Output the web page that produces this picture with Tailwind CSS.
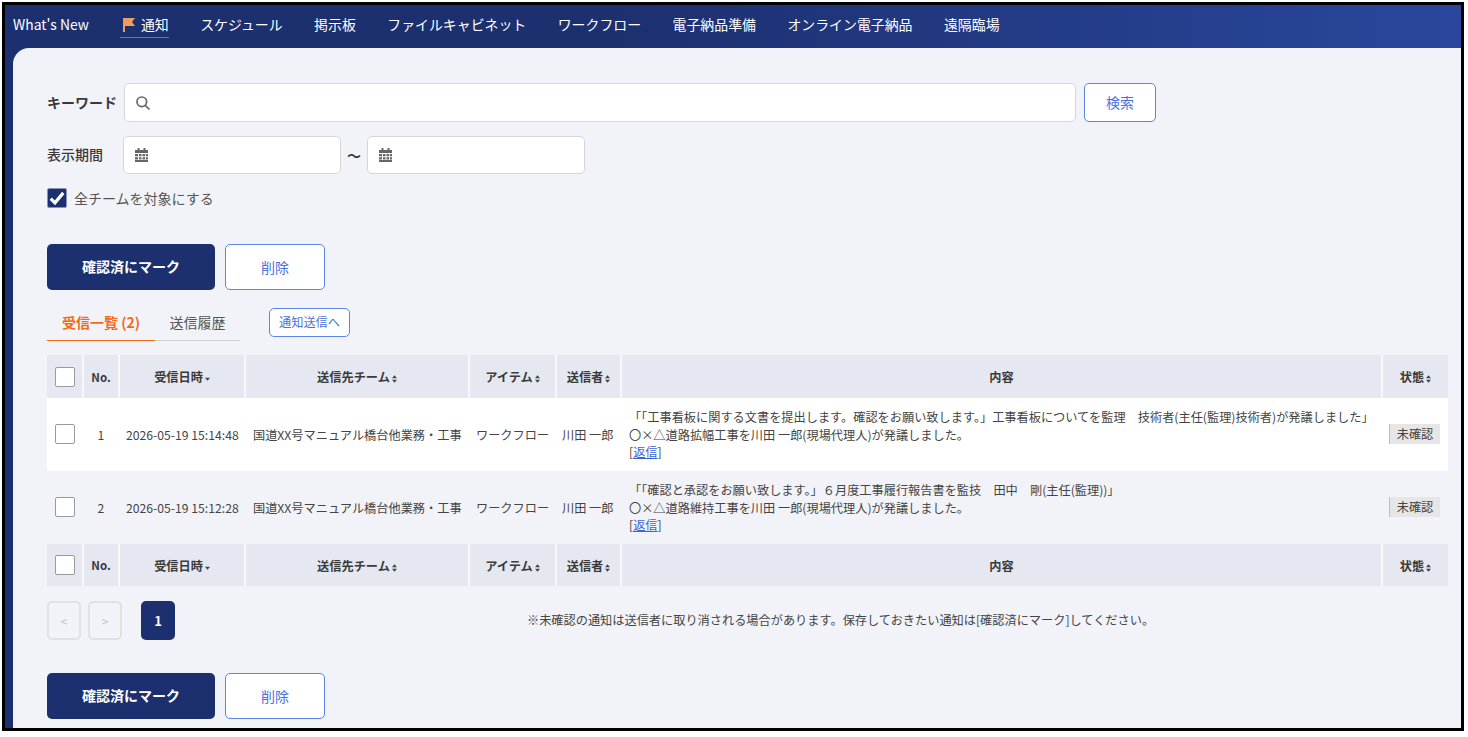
<!DOCTYPE html>
<html lang="ja">
<head>
<meta charset="utf-8">
<script src="https://cdn.jsdelivr.net/npm/@tailwindcss/browser@4"></script>
</head>
<body class="bg-white overflow-hidden font-['Noto_Sans_CJK_JP','Noto_Sans',sans-serif] text-[#3a3a3a]">
<div class="w-[1462px] h-[729px] m-[2px] border-[3px] border-black bg-[#1c2f6e] flex flex-col overflow-hidden">
  <nav class="h-[43px] shrink-0 flex items-center pl-[8px] pb-[4px] text-[13.9px] text-white bg-gradient-to-r from-[#1c2f6e] from-40% to-[#2a479d]">
    <span class="mr-[31px]">What's New</span>
    <span class="flex items-center gap-[5px] mr-[31.5px] pt-[2px] pb-[1px] h-[27px] border-b border-[#4f7be0] pl-[2px]">
      <svg class="w-[14px] h-[15px]" viewBox="0 0 14 15"><path d="M1 1h12l-3 4 3 4H3v6H1z" fill="#ee9d5c"/></svg>
      <span>通知</span>
    </span>
    <span class="mr-[31.5px]">スケジュール</span>
    <span class="mr-[31.5px]">掲示板</span>
    <span class="mr-[31.5px]">ファイルキャビネット</span>
    <span class="mr-[31.5px]">ワークフロー</span>
    <span class="mr-[31.5px]">電子納品準備</span>
    <span class="mr-[31.5px]">オンライン電子納品</span>
    <span>遠隔臨場</span>
  </nav>
  <main class="flex-1 ml-[8px] bg-[#f2f3f8] rounded-tl-[16px] pl-[34px] pr-[13px] pt-[35px] overflow-hidden">
    <div class="flex items-center h-[39px]">
      <label class="w-[77px] text-[14px] font-bold whitespace-nowrap">キーワード</label>
      <div class="w-[952px] h-[39px] bg-white border border-[#d6d6d6] rounded-[5px] flex items-center pl-[10px]">
        <svg class="w-[16px] h-[16px]" viewBox="0 0 16 16" fill="none" stroke="#666" stroke-width="1.7"><circle cx="6.8" cy="6.8" r="4.8"/><path d="M10.3 10.3l4.2 4.2"/></svg>
      </div>
      <button class="ml-[8px] w-[72px] h-[39px] bg-white border border-[#5d84ea] rounded-[5px] text-[14px] text-[#4a72e0]">検索</button>
    </div>
    <div class="flex items-center h-[38px] mt-[14px]">
      <label class="w-[76px] text-[14px] font-medium whitespace-nowrap pb-[2px]">表示期間</label>
      <div class="w-[218px] h-[38px] bg-white border border-[#d6d6d6] rounded-[5px] flex items-center pl-[11px]">
        <svg class="w-[13px] h-[14px]" viewBox="0 0 13 14" fill="#666"><path d="M2.5 0h2v2h4V0h2v2H13v3H0V2h2.5z"/><path d="M0 6h3v2.2H0zM4 6h2.5v2.2H4zM7.5 6H10v2.2H7.5zM10.8 6H13v2.2h-2.2zM0 9.2h3v2.2H0zM4 9.2h2.5v2.2H4zM7.5 9.2H10v2.2H7.5zM10.8 9.2H13v2.2h-2.2zM0 12h13v2H0z"/></svg>
      </div>
      <span class="w-[26px] text-center text-[14px] font-bold">～</span>
      <div class="w-[218px] h-[38px] bg-white border border-[#d6d6d6] rounded-[5px] flex items-center pl-[11px]">
        <svg class="w-[13px] h-[14px]" viewBox="0 0 13 14" fill="#666"><path d="M2.5 0h2v2h4V0h2v2H13v3H0V2h2.5z"/><path d="M0 6h3v2.2H0zM4 6h2.5v2.2H4zM7.5 6H10v2.2H7.5zM10.8 6H13v2.2h-2.2zM0 9.2h3v2.2H0zM4 9.2h2.5v2.2H4zM7.5 9.2H10v2.2H7.5zM10.8 9.2H13v2.2h-2.2zM0 12h13v2H0z"/></svg>
      </div>
    </div>
    <div class="flex items-center mt-[14px] h-[20px]">
      <span class="w-[20px] h-[20px] bg-[#1c2f6e] rounded-[2px] border border-[#8a94b5] flex items-center justify-center">
        <svg class="w-[16px] h-[16px]" viewBox="0 0 14 14" fill="none" stroke="#fff" stroke-width="2.8"><path d="M1.5 7.5l3.7 3.7L12.5 2.5"/></svg>
      </span>
      <span class="ml-[7px] text-[14px] text-[#555]">全チームを対象にする</span>
    </div>
    <div class="flex mt-[36px] gap-[10px]">
      <button class="w-[168px] h-[46px] pb-[2px] bg-[#1c2f6e] rounded-[5px] text-white text-[14px] font-bold">確認済にマーク</button>
      <button class="w-[100px] h-[46px] bg-white border border-[#5d84ea] rounded-[5px] text-[#4a72e0] text-[14px]">削除</button>
    </div>
    <div class="flex items-start mt-[18px] h-[47px]">
      <span class="w-[108px] h-[33px] border-b border-[#f26a13] text-[#f26a13] text-[14px] font-bold flex items-center justify-center pb-[4px]">受信一覧 (2)</span>
      <span class="w-[85px] h-[33px] border-b border-[#cfcfcf] text-[#555] text-[14px] flex items-center justify-center pb-[4px]">送信履歴</span>
      <button class="ml-[29px] mt-[-2px] w-[81px] h-[29px] translate-y-[2px] bg-white border border-[#5d84ea] rounded-[5px] text-[#4a72e0] text-[12.2px]">通知送信へ</button>
    </div>
    <table class="table-fixed border-collapse w-[1401px] text-[12.2px]">
      <colgroup>
        <col class="w-[36px]"><col class="w-[36px]"><col class="w-[126px]"><col class="w-[224px]"><col class="w-[87px]"><col class="w-[65px]"><col class="w-[761px]"><col class="w-[66px]">
      </colgroup>
      <thead>
        <tr class="h-[43px] bg-[#e5e8f1] text-[#3a3a3a]">
          <th class="border-r-2 border-[#f7f8fb] pl-[8px] text-left font-normal"><span class="block w-[20px] h-[20px] bg-white border border-[#9a9a9a] rounded-[2px]"></span></th>
          <th class="border-r-2 border-[#f7f8fb] pt-[2px] font-bold text-[11.5px]">No.</th>
          <th class="border-r-2 border-[#f7f8fb] pt-[2px] font-bold">受信日時<svg class="inline w-[5px] h-[8px] ml-[2px]" viewBox="0 0 6 9" fill="#444"><path d="M0 3h6L3 6.5z"/></svg></th>
          <th class="border-r-2 border-[#f7f8fb] pt-[2px] font-bold">送信先チーム<svg class="inline w-[5px] h-[8px] ml-[2px]" viewBox="0 0 6 9" fill="#444"><path d="M0 3.6h6L3 0zM0 5.4h6L3 9z"/></svg></th>
          <th class="border-r-2 border-[#f7f8fb] pt-[2px] font-bold">アイテム<svg class="inline w-[5px] h-[8px] ml-[2px]" viewBox="0 0 6 9" fill="#444"><path d="M0 3.6h6L3 0zM0 5.4h6L3 9z"/></svg></th>
          <th class="border-r-2 border-[#f7f8fb] pt-[2px] font-bold">送信者<svg class="inline w-[5px] h-[8px] ml-[2px]" viewBox="0 0 6 9" fill="#444"><path d="M0 3.6h6L3 0zM0 5.4h6L3 9z"/></svg></th>
          <th class="border-r-2 border-[#f7f8fb] pt-[2px] font-bold">内容</th>
          <th class="pt-[2px] font-bold">状態<svg class="inline w-[5px] h-[8px] ml-[2px]" viewBox="0 0 6 9" fill="#444"><path d="M0 3.6h6L3 0zM0 5.4h6L3 9z"/></svg></th>
        </tr>
      </thead>
      <tbody class="text-[#444]">
        <tr class="h-[73px] bg-white">
          <td class="pl-[8px] pb-[1px]"><span class="block w-[20px] h-[20px] bg-white border border-[#9a9a9a] rounded-[2px]"></span></td>
          <td class="pt-[2px] text-center">1</td>
          <td class="pt-[2px] whitespace-nowrap pl-[7px]">2026-05-19 15:14:48</td>
          <td class="pt-[2px] whitespace-nowrap pl-[8px]">国道XX号マニュアル橋台他業務・工事</td>
          <td class="pt-[2px] whitespace-nowrap pl-[7px]">ワークフロー</td>
          <td class="pt-[2px] whitespace-nowrap pl-[6px]">川田 一郎</td>
          <td class="pt-[2px] pl-[8px] leading-[17.5px] whitespace-nowrap">
            「「工事看板に関する文書を提出します。確認をお願い致します。」工事看板についてを監理　技術者(主任(監理)技術者)が発議しました」<br>
            〇×△道路拡幅工事を川田 一郎(現場代理人)が発議しました。<br>
            [<a class="text-[#3a63d8] underline">返信</a>]
          </td>
          <td class="pl-[7px] pb-[1px]"><span class="block w-[51px] h-[20px] leading-[20px] bg-[#e6e6e6] border-l border-[#bdbdbd] text-center">未確認</span></td>
        </tr>
        <tr class="h-[73px] bg-[#f2f3f8]">
          <td class="pl-[8px] pb-[1px]"><span class="block w-[20px] h-[20px] bg-white border border-[#9a9a9a] rounded-[2px]"></span></td>
          <td class="pt-[2px] text-center">2</td>
          <td class="pt-[2px] whitespace-nowrap pl-[7px]">2026-05-19 15:12:28</td>
          <td class="pt-[2px] whitespace-nowrap pl-[8px]">国道XX号マニュアル橋台他業務・工事</td>
          <td class="pt-[2px] whitespace-nowrap pl-[7px]">ワークフロー</td>
          <td class="pt-[2px] whitespace-nowrap pl-[6px]">川田 一郎</td>
          <td class="pt-[2px] pl-[8px] leading-[17.5px] whitespace-nowrap">
            「「確認と承認をお願い致します。」６月度工事履行報告書を監技　田中　剛(主任(監理))」<br>
            〇×△道路維持工事を川田 一郎(現場代理人)が発議しました。<br>
            [<a class="text-[#3a63d8] underline">返信</a>]
          </td>
          <td class="pl-[7px] pb-[1px]"><span class="block w-[51px] h-[20px] leading-[20px] bg-[#e6e6e6] border-l border-[#bdbdbd] text-center">未確認</span></td>
        </tr>
      </tbody>
      <tfoot>
        <tr class="h-[42px] bg-[#e5e8f1] text-[#3a3a3a]">
          <th class="border-r-2 border-[#f7f8fb] pl-[8px] text-left font-normal"><span class="block w-[20px] h-[20px] bg-white border border-[#9a9a9a] rounded-[2px]"></span></th>
          <th class="border-r-2 border-[#f7f8fb] pt-[2px] font-bold text-[11.5px]">No.</th>
          <th class="border-r-2 border-[#f7f8fb] pt-[2px] font-bold">受信日時<svg class="inline w-[5px] h-[8px] ml-[2px]" viewBox="0 0 6 9" fill="#444"><path d="M0 3h6L3 6.5z"/></svg></th>
          <th class="border-r-2 border-[#f7f8fb] pt-[2px] font-bold">送信先チーム<svg class="inline w-[5px] h-[8px] ml-[2px]" viewBox="0 0 6 9" fill="#444"><path d="M0 3.6h6L3 0zM0 5.4h6L3 9z"/></svg></th>
          <th class="border-r-2 border-[#f7f8fb] pt-[2px] font-bold">アイテム<svg class="inline w-[5px] h-[8px] ml-[2px]" viewBox="0 0 6 9" fill="#444"><path d="M0 3.6h6L3 0zM0 5.4h6L3 9z"/></svg></th>
          <th class="border-r-2 border-[#f7f8fb] pt-[2px] font-bold">送信者<svg class="inline w-[5px] h-[8px] ml-[2px]" viewBox="0 0 6 9" fill="#444"><path d="M0 3.6h6L3 0zM0 5.4h6L3 9z"/></svg></th>
          <th class="border-r-2 border-[#f7f8fb] pt-[2px] font-bold">内容</th>
          <th class="pt-[2px] font-bold">状態<svg class="inline w-[5px] h-[8px] ml-[2px]" viewBox="0 0 6 9" fill="#444"><path d="M0 3.6h6L3 0zM0 5.4h6L3 9z"/></svg></th>
        </tr>
      </tfoot>
    </table>
    <div class="flex items-center mt-[15px] h-[39px] relative">
      <span class="w-[34px] h-[39px] border-2 border-[#e1e1e1] rounded-[5px] flex items-center justify-center text-[#c4c4c4] text-[12px]">&lt;</span>
      <span class="ml-[7px] w-[34px] h-[39px] border-2 border-[#e1e1e1] rounded-[5px] flex items-center justify-center text-[#c4c4c4] text-[12px]">&gt;</span>
      <span class="ml-[19px] w-[34px] h-[39px] bg-[#1c2f6e] rounded-[5px] flex items-center justify-center text-white text-[13px] font-bold">1</span>
      <span class="ml-[352px] text-[12.2px] text-[#444] whitespace-nowrap">※未確認の通知は送信者に取り消される場合があります。保存しておきたい通知は[確認済にマーク]してください。</span>
    </div>
    <div class="flex mt-[33px] gap-[10px]">
      <button class="w-[168px] h-[46px] pb-[2px] bg-[#1c2f6e] rounded-[5px] text-white text-[14px] font-bold">確認済にマーク</button>
      <button class="w-[100px] h-[46px] bg-white border border-[#5d84ea] rounded-[5px] text-[#4a72e0] text-[14px]">削除</button>
    </div>
  </main>
</div>
</body>
</html>
